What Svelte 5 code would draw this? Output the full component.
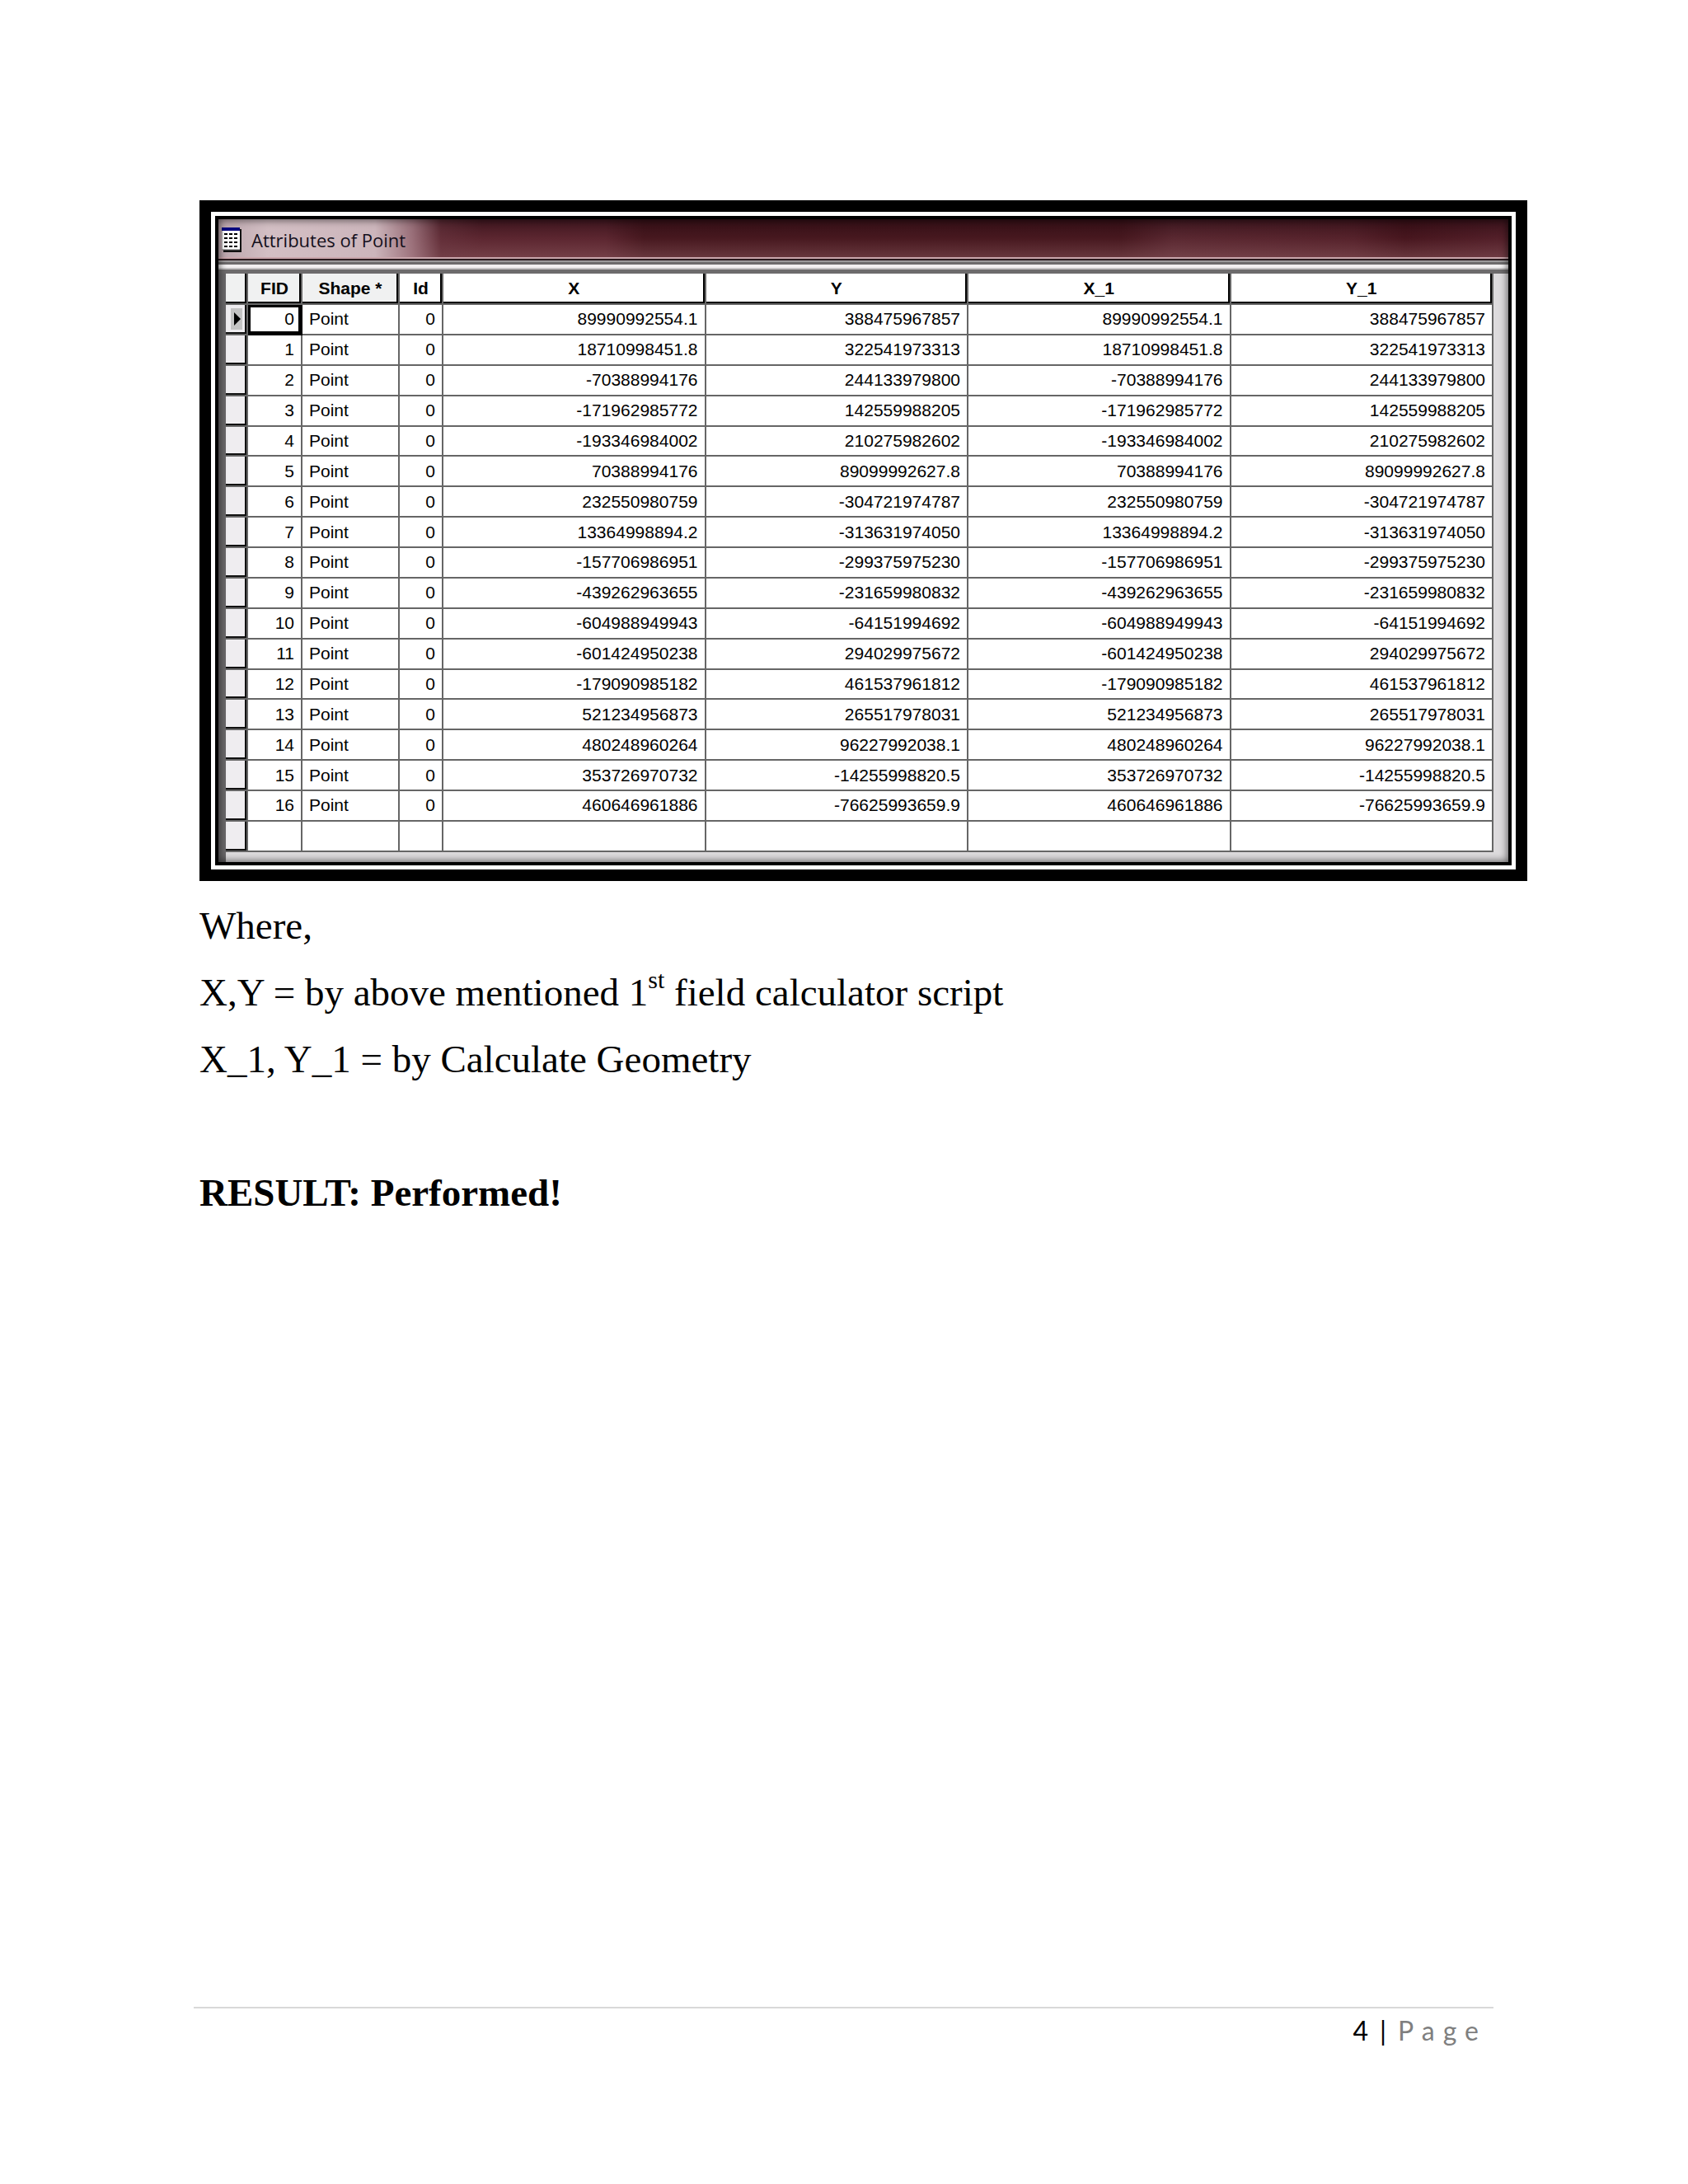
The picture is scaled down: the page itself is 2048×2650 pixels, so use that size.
<script lang="ts">
    type Row = { x: string; y: string };

    const columns = ['X', 'Y', 'X_1', 'Y_1'];

    const rows: Row[] = [
        { x: '89990992554.1', y: '388475967857' },
        { x: '18710998451.8', y: '322541973313' },
        { x: '-70388994176', y: '244133979800' },
        { x: '-171962985772', y: '142559988205' },
        { x: '-193346984002', y: '210275982602' },
        { x: '70388994176', y: '89099992627.8' },
        { x: '232550980759', y: '-304721974787' },
        { x: '13364998894.2', y: '-313631974050' },
        { x: '-157706986951', y: '-299375975230' },
        { x: '-439262963655', y: '-231659980832' },
        { x: '-604988949943', y: '-64151994692' },
        { x: '-601424950238', y: '294029975672' },
        { x: '-179090985182', y: '461537961812' },
        { x: '521234956873', y: '265517978031' },
        { x: '480248960264', y: '96227992038.1' },
        { x: '353726970732', y: '-14255998820.5' },
        { x: '460646961886', y: '-76625993659.9' }
    ];

    let current = $state(0);
</script>

<div class="page">
    <main>
        <figure class="frame">
            <div class="window">
                <header class="title-bar">
                    <svg class="table-icon" viewBox="0 0 24 30" aria-hidden="true">
                        <path d="M2 2H24V30H2z" fill="#111" />
                        <path d="M0 0H22V27H0z" fill="#fff" />
                        <path d="M0 0H22V4H0z" fill="#0a0a80" />
                        <path d="M0 4V27H22" fill="none" stroke="#777" />
                        <path
                            d="M3 8H19M3 13H19M3 18H19M3 23H19"
                            stroke="#000"
                            stroke-width="2"
                            stroke-dasharray="4 2"
                        />
                    </svg>
                    <h1>Attributes of Point</h1>
                </header>
                <div class="bevel"></div>
                <div class="grid-area">
                    <table>
                        <colgroup>
                            <col class="col-select" />
                            <col class="col-fid" />
                            <col class="col-shape" />
                            <col class="col-id" />
                            <col span="4" />
                        </colgroup>
                        <thead>
                            <tr>
                                <th class="shaded"></th>
                                <th class="shaded">FID</th>
                                <th class="shaded">Shape *</th>
                                <th>Id</th>
                                {#each columns as column}
                                    <th>{column}</th>
                                {/each}
                            </tr>
                        </thead>
                        <tbody>
                            {#each rows as row, i}
                                <tr class:current={i === current} onclick={() => (current = i)}>
                                    <td class="selector">
                                        {#if i === current}
                                            <svg class="marker" viewBox="0 0 14 26" aria-hidden="true">
                                                <path d="M0 0H14V26H0z" fill="#c4c4c4" />
                                                <path d="M4 5L12 13L4 21z" fill="#000" />
                                            </svg>
                                        {/if}
                                    </td>
                                    <td class="number fid">{i}</td>
                                    <td>Point</td>
                                    <td class="number">0</td>
                                    <td class="number">{row.x}</td>
                                    <td class="number">{row.y}</td>
                                    <td class="number">{row.x}</td>
                                    <td class="number">{row.y}</td>
                                </tr>
                            {/each}
                            <tr>
                                <td class="selector"></td>
                                {#each Array(7) as _}
                                    <td></td>
                                {/each}
                            </tr>
                        </tbody>
                    </table>
                </div>
            </div>
        </figure>

        <section class="notes">
            <p>Where,</p>
            <p>X,Y = by above mentioned 1<sup>st</sup> field calculator script</p>
            <p>X_1, Y_1 = by Calculate Geometry</p>
            <p class="result">RESULT: Performed!</p>
        </section>
    </main>

    <footer>
        <span>4</span>
        <span>|</span>
        <span class="label">Page</span>
    </footer>
</div>

<style>
    :global(body) {
        background: #fff;
        color: #000;
    }

    .page {
        box-sizing: border-box;
        min-height: 100vh;
        display: flex;
        flex-direction: column;
        justify-content: space-between;
        padding: 243px 195px 166px 242px;
    }

    .frame {
        margin: 0;
        padding: 5px;
        border: 14px solid #000;
        background: #fff;
    }

    .window {
        position: relative;
        border: 4px solid #000;
        background: #dddbdd;
    }

    /* dark inner edge that runs round the whole window */
    .window::after {
        content: '';
        position: absolute;
        inset: 0;
        box-shadow: inset 0 0 10px 1px rgba(0, 0, 0, 0.6);
        pointer-events: none;
    }

    .title-bar {
        box-sizing: border-box;
        display: flex;
        align-items: center;
        gap: 12px;
        height: 48px;
        padding: 4px 0 0 4px;
        border-bottom: 2px solid #c9a5ab;
        background:
            linear-gradient(90deg, #b9a3aa 0, #d3bfc4 60px, #ccb5bb 190px, rgba(170, 130, 140, 0.8) 235px, rgba(110, 60, 70, 0.4) 270px, rgba(90, 40, 50, 0) 320px),
            linear-gradient(180deg, rgba(30, 5, 12, 0.5), rgba(70, 20, 30, 0) 50%, rgba(150, 100, 105, 0.4)),
            linear-gradient(90deg, #5c2630 0, #5c2630 30%, #47181f 33%, #47181f 70%, #5a2831 74%, #56222b 88%, #47161e 92%, #54202a);
    }

    .table-icon {
        width: 24px;
        height: 30px;
    }

    h1 {
        margin: 0;
        font: 400 22px/30px 'Open Sans', sans-serif;
        color: #14101c;
    }

    .bevel {
        height: 18px;
        background: linear-gradient(180deg, #2a1a1e 0 2px, #9b999a 2px 4px, #6d6b6c 4px 7px, #f1eff0 7px 11px, #c4c2c3 11px 13px, #6d6b6c 13px 18px);
    }

    .grid-area {
        padding: 0 18px 12px 0;
        border-left: 9px solid #6a686a;
    }

    table {
        width: 100%;
        height: 702px;
        table-layout: fixed;
        border-collapse: separate;
        border-spacing: 0;
        background: #fff;
        font: 21px/26px 'Liberation Sans', sans-serif;
    }

    .col-select {
        width: 27px;
    }

    .col-fid {
        width: 66px;
    }

    .col-shape {
        width: 118px;
    }

    .col-id {
        width: 53px;
    }

    tbody tr {
        height: 36px;
    }

    th,
    td {
        box-sizing: border-box;
        padding: 0 8px;
        border-right: 2px solid #666;
        border-bottom: 2px solid #666;
        text-align: left;
        white-space: nowrap;
    }

    th {
        height: 38px;
        padding: 0;
        box-shadow: inset -2px -2px 0 #000;
        font-weight: 700;
        text-align: center;
    }

    .shaded {
        background: #f0f1f1;
    }

    .number {
        text-align: right;
    }

    .selector {
        padding: 0;
        background: #efedf0;
        box-shadow: inset -2px -2px 0 #111;
    }

    .marker {
        display: block;
        width: 14px;
        height: 26px;
        margin-left: 6px;
    }

    .current .fid {
        box-shadow: inset 0 0 0 3px #000;
        border-color: #000;
    }

    .notes {
        margin-top: 14px;
        font: 47px/81px 'Liberation Serif', serif;
    }

    .notes p {
        margin: 0;
    }

    .notes sup {
        font-size: 30px;
        line-height: 0;
        vertical-align: 21px;
    }

    .notes .result {
        margin-top: 81px;
        font-weight: 700;
    }

    footer {
        display: flex;
        justify-content: flex-end;
        gap: 14px;
        margin: 0 41px 0 -7px;
        padding: 7px 8px 0 0;
        border-top: 2px solid #d9d9d9;
        font: 32px/40px Lato, sans-serif;
    }

    .label {
        color: #7f7f7f;
        letter-spacing: 10px;
    }
</style>
